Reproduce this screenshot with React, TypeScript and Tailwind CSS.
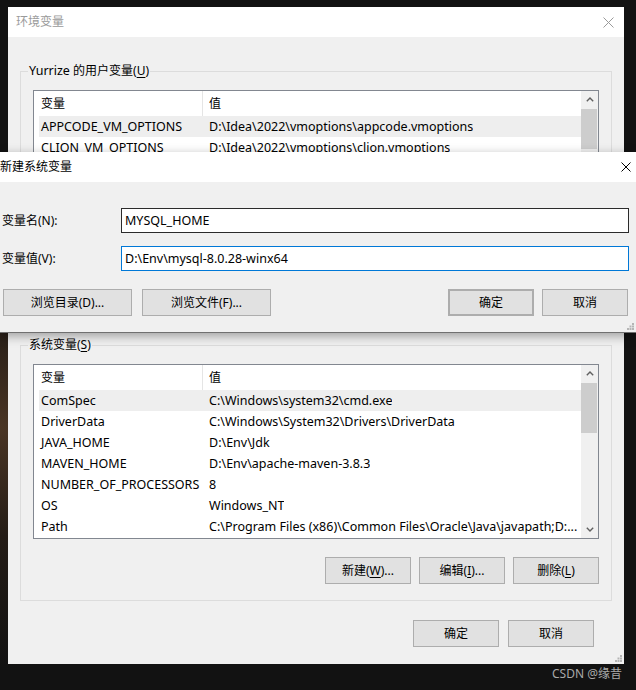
import React from "react";

type Row = [string, string];

const userRows: Row[] = [
  ["APPCODE_VM_OPTIONS", "D:\\Idea\\2022\\vmoptions\\appcode.vmoptions"],
  ["CLION_VM_OPTIONS", "D:\\Idea\\2022\\vmoptions\\clion.vmoptions"],
  ["DATAGRIP_VM_OPTIONS", "D:\\Idea\\2022\\vmoptions\\datagrip.vmoptions"],
  ["GOLAND_VM_OPTIONS", "D:\\Idea\\2022\\vmoptions\\goland.vmoptions"],
  ["IDEA_VM_OPTIONS", "D:\\Idea\\2022\\vmoptions\\idea.vmoptions"],
  ["OneDrive", "C:\\Users\\Yurrize\\OneDrive"],
  ["Path", "C:\\Users\\Yurrize\\AppData\\Local\\Microsoft\\WindowsApps;"],
];

const sysRows: Row[] = [
  ["ComSpec", "C:\\Windows\\system32\\cmd.exe"],
  ["DriverData", "C:\\Windows\\System32\\Drivers\\DriverData"],
  ["JAVA_HOME", "D:\\Env\\Jdk"],
  ["MAVEN_HOME", "D:\\Env\\apache-maven-3.8.3"],
  ["NUMBER_OF_PROCESSORS", "8"],
  ["OS", "Windows_NT"],
  ["Path", "C:\\Program Files (x86)\\Common Files\\Oracle\\Java\\javapath;D:..."],
];

function Chevron({ up }: { up: boolean }) {
  return (
    <svg width="8" height="5" viewBox="0 0 8 5">
      <path
        d={up ? "M0.8 4.3 L4 1.1 L7.2 4.3" : "M0.8 0.7 L4 3.9 L7.2 0.7"}
        fill="none"
        stroke="#606060"
        strokeWidth="1.4"
      />
    </svg>
  );
}

function Grip() {
  return (
    <svg width="7" height="7" viewBox="0 0 7 7">
      <rect x="5" y="0" width="2" height="2" fill="#b5b5b5" />
      <rect x="2.5" y="2.5" width="2" height="2" fill="#b5b5b5" />
      <rect x="5" y="2.5" width="2" height="2" fill="#b5b5b5" />
      <rect x="0" y="5" width="2" height="2" fill="#b5b5b5" />
      <rect x="2.5" y="5" width="2" height="2" fill="#b5b5b5" />
      <rect x="5" y="5" width="2" height="2" fill="#b5b5b5" />
    </svg>
  );
}

function Btn({
  children,
  className = "",
}: {
  children: React.ReactNode;
  className?: string;
}) {
  return (
    <div
      className={`h-[27px] flex items-center justify-center bg-[#e1e1e1] border border-[#adadad] text-black whitespace-nowrap ${className}`}
    >
      {children}
    </div>
  );
}

function U({ children }: { children: React.ReactNode }) {
  return <span className="underline underline-offset-[2px] decoration-1">{children}</span>;
}

function VarList({ rows, thumbH }: { rows: Row[]; thumbH: number }) {
  return (
    <div className="h-[175px] border border-[#828790] bg-white flex">
      <div className="flex-1 min-w-0 pl-[5px] flex flex-col overflow-hidden">
        <div className="h-[25px] flex items-stretch shrink-0">
          <div className="w-[163px] pl-[2px] flex items-center">变量</div>
          <div className="w-px bg-[#e5e5e5]" />
          <div className="pl-[6px] flex items-center">值</div>
        </div>
        {rows.map((r, i) => (
          <div
            key={r[0]}
            className={`h-[21px] shrink-0 flex items-center whitespace-nowrap text-[12.5px] ${
              i === 0 ? "bg-[#eeeeee]" : ""
            }`}
          >
            <div className="w-[164px] pl-[2px] overflow-hidden">{r[0]}</div>
            <div className="pl-[6px] overflow-hidden">{r[1]}</div>
          </div>
        ))}
      </div>
      <div className="w-[17px] bg-[#f0f0f0] flex flex-col shrink-0">
        <div className="h-[17px] flex items-center justify-center shrink-0">
          <Chevron up />
        </div>
        <div className="mt-[1px] mr-[1px] bg-[#cdcdcd] shrink-0" style={{ height: thumbH }} />
        <div className="flex-1" />
        <div className="h-[17px] flex items-center justify-center shrink-0">
          <Chevron up={false} />
        </div>
      </div>
    </div>
  );
}

function Group({
  label,
  rows,
  thumbH,
}: {
  label: React.ReactNode;
  rows: Row[];
  thumbH: number;
}) {
  return (
    <div className="relative h-[256px] border border-[#dcdcdc] px-[12px] pt-[18px] pb-[16px] flex flex-col">
      <span className="absolute -top-[9px] left-[7px] px-[1px] bg-[#f0f0f0] leading-[16px]">
        {label}
      </span>
      <VarList rows={rows} thumbH={thumbH} />
      <div className="mt-[18px] flex justify-end gap-[8px]">
        <Btn className="w-[86px]">
          新建(<U>W</U>)...
        </Btn>
        <Btn className="w-[86px]">
          编辑(<U>I</U>)...
        </Btn>
        <Btn className="w-[86px]">
          删除(<U>L</U>)
        </Btn>
      </div>
    </div>
  );
}

function MainWindow() {
  return (
    <div className="absolute left-[8px] top-[7px] w-[616px] h-[657px] bg-[#f0f0f0] flex flex-col">
      <div className="h-[30px] bg-white flex items-center justify-between shrink-0">
        <span className="pl-[8px] text-[#9a9a9a]">环境变量</span>
        <svg width="11" height="11" viewBox="0 0 11 11" className="mr-[10px]">
          <path d="M0.5 0.5 L10.5 10.5 M10.5 0.5 L0.5 10.5" stroke="#9a9a9a" strokeWidth="1" />
        </svg>
      </div>
      <div className="flex-1 px-[12px] pt-[34px] flex flex-col">
        <Group
          label={
            <>
              <span className="text-[12.5px]">Yurrize</span> 的用户变量(<U>U</U>)
            </>
          }
          rows={userRows}
          thumbH={40}
        />
        <div className="mt-[18px]">
          <Group
            label={
              <>
                系统变量(<U>S</U>)
              </>
            }
            rows={sysRows}
            thumbH={50}
          />
        </div>
        <div className="mt-[19px] flex justify-end gap-[9px] pr-[18px]">
          <Btn className="w-[86px]">确定</Btn>
          <Btn className="w-[86px]">取消</Btn>
        </div>
      </div>
      <div className="absolute right-[2px] bottom-[2px]">
        <Grip />
      </div>
    </div>
  );
}

function Dialog() {
  return (
    <div className="absolute left-0 top-[152px] w-[636px] h-[181px] bg-[#f0f0f0] border-b border-[#707070] shadow-[0_3px_10px_rgba(0,0,0,0.35)] flex flex-col">
      <div className="h-[30px] bg-white flex items-center justify-between shrink-0">
        <span>新建系统变量</span>
        <svg width="10" height="10" viewBox="0 0 10 10" className="mr-[5px]">
          <path d="M0.5 0.5 L9.5 9.5 M9.5 0.5 L0.5 9.5" stroke="#000" strokeWidth="1" />
        </svg>
      </div>
      <div className="flex-1 pt-[26px] flex flex-col">
        <div className="h-[25px] flex items-center">
          <div className="w-[121px] pl-[2px]">变量名(N):</div>
          <div className="flex-1 mr-[7px] h-[25px] bg-white border border-[#2b2b2b] pl-[3px] flex items-center text-[12.5px]">
            MYSQL_HOME
          </div>
        </div>
        <div className="mt-[13px] h-[25px] flex items-center">
          <div className="w-[121px] pl-[2px]">变量值(V):</div>
          <div className="flex-1 mr-[7px] h-[25px] bg-white border border-[#0078d7] pl-[3px] flex items-center text-[12.5px]">
            D:\Env\mysql-8.0.28-winx64
          </div>
        </div>
        <div className="mt-[18px] flex pl-[3px] pr-[8px]">
          <Btn className="w-[129px]">浏览目录(D)...</Btn>
          <Btn className="w-[129px] ml-[10px]">浏览文件(F)...</Btn>
          <Btn className="w-[86px] ml-auto border-2 border-[#0078d7]">确定</Btn>
          <Btn className="w-[86px] ml-[8px]">取消</Btn>
        </div>
      </div>
      <div className="absolute right-[2px] bottom-[2px]">
        <Grip />
      </div>
    </div>
  );
}

export default function App() {
  return (
    <div className="relative w-[636px] h-[690px] overflow-hidden bg-[#121212] bg-[radial-gradient(40%_35%_at_0%_62%,#4a3524_0%,#241c16_45%,#121212_100%)] [font-family:'Noto_Sans','Noto_Sans_CJK_SC',sans-serif] text-[12px] leading-[16px] text-black">
      <MainWindow />
      <Dialog />
      <div className="absolute left-[552px] top-[666px] text-[#a9a9a9] text-[12px] leading-[16px]">
        CSDN @缘昔
      </div>
    </div>
  );
}
